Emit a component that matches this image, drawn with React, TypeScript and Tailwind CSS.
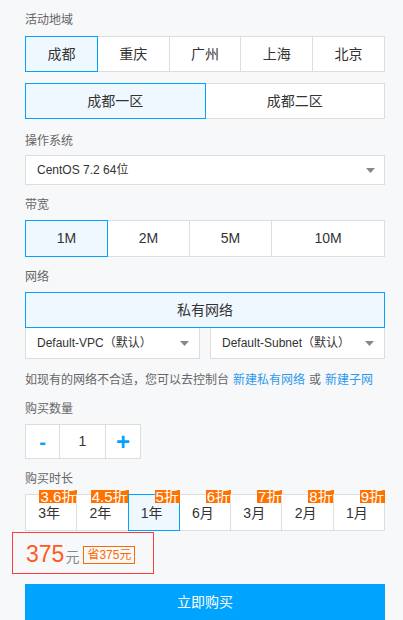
import { useState } from 'react'

const FONT = { fontFamily: '"Liberation Sans", "Noto Sans CJK SC", sans-serif' }

const REGIONS = ['成都', '重庆', '广州', '上海', '北京']
const ZONES = ['成都一区', '成都二区']
const BANDWIDTHS = [
  { label: '1M', w: 'w-[83px]' },
  { label: '2M', w: 'w-[83px]' },
  { label: '5M', w: 'w-[83px]' },
  { label: '10M', w: 'flex-1' },
]
const DURATIONS = [
  { label: '3年', off: '3.6折' },
  { label: '2年', off: '4.5折' },
  { label: '1年', off: '5折' },
  { label: '6月', off: '6折' },
  { label: '3月', off: '7折' },
  { label: '2月', off: '8折' },
  { label: '1月', off: '9折' },
]

function Label({ children, className = '' }: { children: React.ReactNode; className?: string }) {
  return <div className={`text-[12px] leading-[20px] text-[#666] ${className}`}>{children}</div>
}

function Caret() {
  return (
    <svg width="9" height="5" viewBox="0 0 9 5" className="shrink-0">
      <path d="M0 0h9L4.5 5z" fill="#888" />
    </svg>
  )
}

function cell(active: boolean) {
  return active
    ? 'relative z-10 border border-[#00a4ff] bg-[#f0f8ff]'
    : 'border border-[#dddddd] bg-white'
}

export default function App() {
  const [region, setRegion] = useState(0)
  const [zone, setZone] = useState(0)
  const [bw, setBw] = useState(0)
  const [count, setCount] = useState(1)
  const [duration, setDuration] = useState(2)

  return (
    <div className="min-h-screen bg-[#f7f8fa] text-[#333]" style={FONT}>
      <div className="ml-[25px] w-[360px] pt-[10px] pb-[20px]">
        {/* 地域 */}
        <Label className="mb-[6px]">活动地域</Label>
        <div className="flex">
          {REGIONS.map((r, i) => (
            <button
              key={r}
              onClick={() => setRegion(i)}
              className={`flex-1 h-[36px] text-[14px] ${i > 0 ? '-ml-px' : ''} ${cell(region === i)}`}
            >
              {r}
            </button>
          ))}
        </div>
        <div className="flex mt-[11px]">
          {ZONES.map((z, i) => (
            <button
              key={z}
              onClick={() => setZone(i)}
              className={`flex-1 h-[36px] text-[14px] ${i > 0 ? '-ml-px' : ''} ${cell(zone === i)}`}
            >
              {z}
            </button>
          ))}
        </div>

        {/* 操作系统 */}
        <Label className="mt-[12px]">操作系统</Label>
        <div className="mt-[4px] h-[30px] flex items-center justify-between border border-[#dddddd] bg-white pl-[11px] pr-[9px] text-[12px]">
          <span>CentOS 7.2 64位</span>
          <Caret />
        </div>

        {/* 带宽 */}
        <Label className="mt-[10px]">带宽</Label>
        <div className="flex mt-[5px]">
          {BANDWIDTHS.map((b, i) => (
            <button
              key={b.label}
              onClick={() => setBw(i)}
              className={`${b.w} h-[37px] text-[14px] ${i > 0 ? '-ml-px' : ''} ${cell(bw === i)}`}
            >
              {b.label}
            </button>
          ))}
        </div>

        {/* 网络 */}
        <Label className="mt-[10px]">网络</Label>
        <div className={`mt-[5px] h-[36px] flex items-center justify-center text-[14px] ${cell(true)}`}>
          私有网络
        </div>
        <div className="flex gap-[10px] -mt-px">
          <div className="w-[175px] h-[32px] flex items-center justify-between border border-[#dddddd] bg-white pl-[11px] pr-[10px] text-[12px]">
            <span>Default-VPC（默认）</span>
            <Caret />
          </div>
          <div className="flex-1 h-[32px] flex items-center justify-between border border-[#dddddd] bg-white pl-[11px] pr-[10px] text-[12px]">
            <span>Default-Subnet（默认）</span>
            <Caret />
          </div>
        </div>
        <div className="mt-[11px] flex gap-[4px] text-[12px] leading-[20px] text-[#666] whitespace-nowrap">
          <span>如现有的网络不合适，您可以去控制台</span>
          <a className="text-[#2f9aeb]">新建私有网络</a>
          <span>或</span>
          <a className="text-[#2f9aeb]">新建子网</a>
        </div>

        {/* 数量 */}
        <Label className="mt-[9px]">购买数量</Label>
        <div className="mt-[5px] flex w-[116px] h-[35px] border border-[#dddddd] bg-white">
          <button
            onClick={() => setCount(c => Math.max(1, c - 1))}
            className="w-[33px] flex items-center justify-center text-[#00a4ff] text-[20px] font-bold"
          >
            -
          </button>
          <div className="w-[47px] border-x border-[#dddddd] flex items-center justify-center text-[14px]">
            {count}
          </div>
          <button
            onClick={() => setCount(c => c + 1)}
            className="flex-1 flex items-center justify-center text-[#00a4ff] text-[24px] font-bold leading-none"
          >
            +
          </button>
        </div>

        {/* 时长 */}
        <Label className="mt-[10px]">购买时长</Label>
        <div className="flex mt-[5px]">
          {DURATIONS.map((d, i) => (
            <button
              key={d.label}
              onClick={() => setDuration(i)}
              className={`flex-1 h-[37px] text-[14px] ${i > 0 ? '-ml-px' : ''} ${cell(duration === i)} relative`}
            >
              <span className="absolute top-[-5px] right-[-1px] bg-[#ff7200] text-white text-[15px] leading-[13px] px-[1px]">
                {d.off}
              </span>
              <span className="relative top-[1px] -left-[2px]">{d.label}</span>
            </button>
          ))}
        </div>

        {/* 价格 */}
        <div className="mt-[1px] -ml-[13px] w-[142px] h-[42px] border border-[#ff3b3b] flex items-center pl-[13px] pt-[3px]">
          <span className="text-[23px] leading-none text-[#ff5a1f]">375</span>
          <span className="text-[14px] text-[#888] ml-px mt-[6px]">元</span>
          <span className="ml-[4px] h-[18px] flex items-center border border-[#ff6a00] px-[3px] text-[12px] text-[#ff6a00]">
            省375元
          </span>
        </div>

        <button className="mt-[10px] w-full h-[36px] bg-[#00a4ff] text-white text-[14px]">立即购买</button>
      </div>
    </div>
  )
}
